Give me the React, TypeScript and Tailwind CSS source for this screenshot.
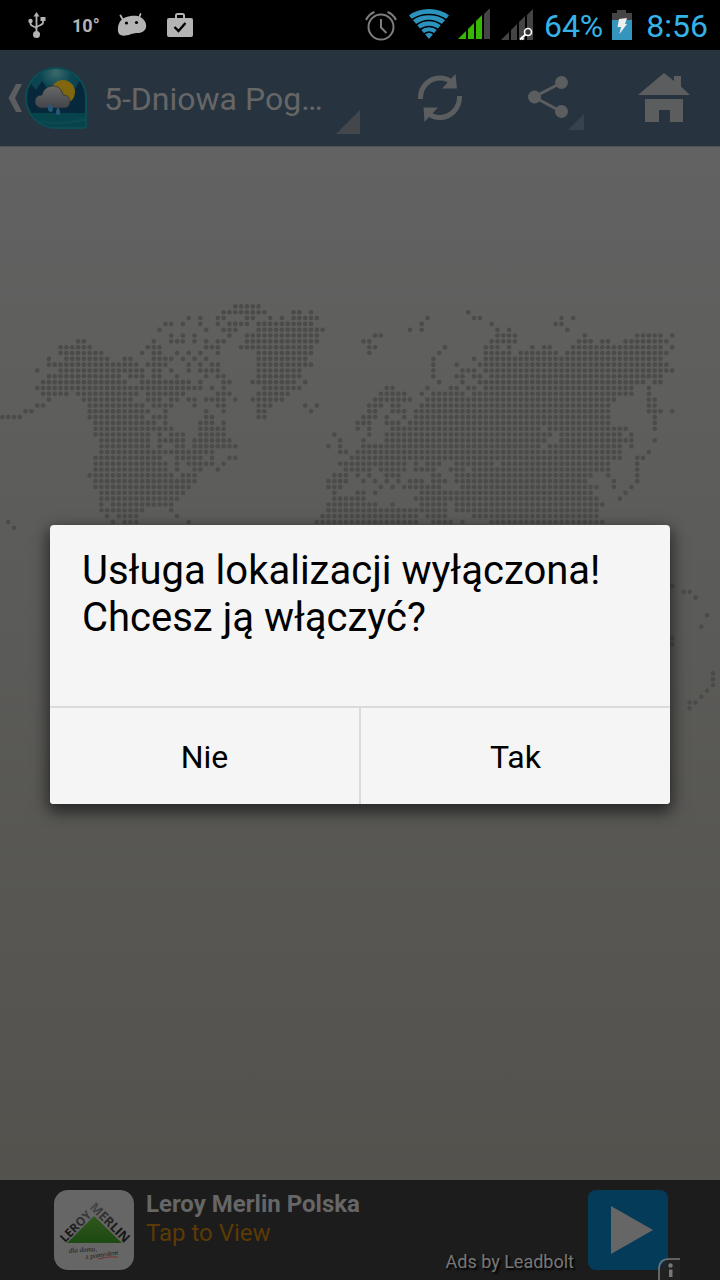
import React from "react";

/* Land dots of the world map: one entry per grid row, "from-to" column runs. */
const MAP_ROWS: Record<number, string> = {
  0: "40-44",
  1: "38-45 50-51 53 80",
  2: "32 34 37-38 42-43 46 48 50-54 73 81-82 96 98",
  3: "28-29 31 34 37 39-42 44-53 72 84 95-96",
  4: "27 35 38-40 44-55 70 72 85 87 97",
  5: "29 31 33 39 42-54 64-65 85-88 100 109-113 115",
  6: "13-14 26 29-31 33 35 37-38 42-54 62-63 84-88 99-101 103-104 107-114",
  7: "10-15 25-27 35-37 41-53 63-64 76 83-85 87 91 93-94 98-113 115",
  8: "10-17 24 26-27 30 32 34 37 44-53 63 75 83-87 89-95 97-114",
  9: "8 11-18 21-22 26-29 31 33 35 44-52 74 81 83-113",
  10: "8-23 25-28 32 34 36-37 44-53 74 78 82-114",
  11: "6 10-24 26-27 29 32 34-37 44-51 74 79-81 83-115",
  12: "8-20 22-24 26-27 30 35 37-38 44-51 74 78-79 81-82 84-113",
  13: "7-21 24-32 34 38-39 43-50 52 75 79 82-110 112-113",
  14: "6-34 36 38 45-51 66-67 73 77-78 80-81 83-108 111",
  15: "7-11 13-23 25-31 37-39 44-49 65-69 72 74-79 81-108 111",
  16: "8 14-22 25-27 29-30 32-33 35-38 40 43-48 64-70 73-105 111-112",
  17: "6-7 15-24 26-29 33 37-38 44-46 52 54 63-65 67-68 72-104 111-112",
  18: "4-5 15-25 28 35 38 44-45 53 63-64 67-69 71-104 111-113 115",
  19: "0-3 15-24 26-28 35-36 44-45 62-64 66 69 71-104 112",
  20: "16-26 28 34-36 38 61-63 66-68 70-104 112",
  21: "16-29 34-38 61 63 67-92 94-107 112",
  22: "16-25 27 29-31 34-38 57 63 66-94 96-106 108",
  23: "17-25 27-31 33-39 58 62 66-93 96-108 112",
  24: "17-25 27 30-31 33-40 56 58 62-92 94-106 108",
  25: "17-36 58-59 61-106 111",
  26: "16-27 30-34 36 39-40 60-106 109-110",
  27: "16-28 30 32-36 38 58-69 71 73-75 78-84 86-104 109",
  28: "16-28 30 33-34 37 59-63 65-69 71-74 77-79 81-104 109",
  29: "15-29 31-33 57-59 61 63 66-68 74-75 78-101 104 109",
  30: "16-33 56-59 62 64 66 68 70-72 74-76 78-100 105 109",
  31: "16-32 56-58 65 67 69-75 79-102 105 108",
  32: "17-31 57 61-62 64 72-101 107",
  33: "17-30 57-62 71-102 106",
  34: "17 19-29 56-64 67 72-76 78-103",
  35: "17-24 29 56-76 78-102",
  36: "18 20-23 30 55-71 73-76 81-102",
  37: "1 19 21-23 32 54-71 74-77 79 84-103",
  38: "2",
  48: "115",
  49: "117-118",
  50: "119",
  53: "121",
  55: "120",
  57: "115",
  58: "115",
  63: "122",
  64: "122",
  65: "122",
  66: "121",
  67: "120",
  68: "118-119",
  69: "118",
};

const PITCH = 5.825;

const DOTS: { key: string; x: number; y: number }[] = Object.entries(MAP_ROWS).flatMap(([row, runs]) =>
  runs.split(" ").flatMap((run) => {
    const [from, to = from] = run.split("-").map(Number);
    return Array.from({ length: to - from + 1 }, (_, i) => ({
      key: `${row}-${from + i}`,
      x: 2.3 + (from + i) * PITCH,
      y: 6.4 + Number(row) * PITCH,
    }));
  })
);

function WorldMap() {
  return (
    <svg viewBox="0 0 720 420" className="block w-full" fill="#4b4b49" aria-hidden="true">
      {DOTS.map((d) => (
        <circle key={d.key} cx={d.x} cy={d.y} r="2.3" />
      ))}
    </svg>
  );
}

function StatusBar() {
  return (
    <div className="flex h-[50px] items-center justify-between bg-black pr-3 pl-7">
      <div className="flex items-center text-[#b4b4b4]">
        <svg width="18" height="26" viewBox="0 0 18 26" fill="none" stroke="currentColor" strokeWidth="1.8" aria-label="USB">
          <path d="M8.500 3v18M8.500 17c0-3-6-2-6-5.500V9M8.500 16c0-3 6.500-2 6.500-5.500V7" />
          <path d="M8.500 0l3 4.500h-6zM12.500 5h5v4h-5z" fill="currentColor" stroke="none" />
          <circle cx="2.500" cy="9" r="2.200" fill="currentColor" stroke="none" />
          <circle cx="8.500" cy="22.500" r="3.500" fill="currentColor" stroke="none" />
        </svg>
        <span className="ml-[26px] text-[18px] font-bold">10°</span>
        <svg className="ml-[17px]" width="30" height="24" viewBox="0 0 30 24" aria-label="Android">
          <path d="M5.500 6L3.500 2.500M22 5l1.500-4" stroke="currentColor" strokeWidth="1.800" strokeLinecap="round" />
          <path d="M8 4.500c5-2 12-2.500 15-.5 4 2 7 6 6 10.500-1 4-5 5.500-8 5.500-3 0-5 .5-8 1.500C9 23 3 23.500 1.500 20 0 16 1 7 8 4.500z" fill="currentColor" />
          <circle cx="9.500" cy="10" r="1.600" fill="#000" />
          <circle cx="19.500" cy="9.500" r="1.600" fill="#000" />
        </svg>
        <svg className="ml-5" width="26" height="24" viewBox="0 0 26 24" aria-label="Zakupy">
          <path d="M9 6V2.500Q9 1 10.500 1h5Q17 1 17 2.500V6" fill="none" stroke="currentColor" strokeWidth="2" />
          <rect y="5" width="26" height="19" rx="2" fill="currentColor" />
          <path d="M7.500 14l4 4 7-8" fill="none" stroke="#000" strokeWidth="2.400" />
        </svg>
      </div>
      <div className="flex items-center text-[#35b3e6]">
        <svg width="32" height="32" viewBox="0 0 32 32" fill="none" stroke="#7e7e7e" strokeWidth="2" aria-label="Alarm">
          <circle cx="16" cy="18" r="12.500" />
          <path d="M16 10v8.500l5.500 5.500M1 11Q4 5 9.500 3M31 11Q28 5 22.500 3" />
        </svg>
        <svg className="ml-3" width="40" height="32" viewBox="0 0 40 32" aria-label="Wi-Fi">
          <path d="M20 30L0 6.500Q8 0 20 0t20 6.500z" fill="#2b93bd" />
          <path d="M2.500 11Q10 5.500 20 5.500T37.500 11M7 16Q13 11.500 20 11.500T33 16M10.500 21Q15 17.500 20 17.500T29.500 21M14 26Q17 23 20 23t6 3" fill="none" stroke="#000" strokeWidth="1.700" />
        </svg>
        <svg className="ml-2" width="34" height="32" viewBox="0 0 34 32" aria-label="Sygnał">
          <path d="M1 30l8-8v8zM11 20l6-6v16h-6zM19 12l6-6v24h-6z" fill="#35b900" />
          <path d="M27 5l6-6v31h-6z" fill="#444" />
        </svg>
        <svg className="ml-[9px]" width="34" height="32" viewBox="0 0 34 32" aria-label="Sygnał SIM 2">
          <path d="M1 31l8-8v8zM11 21l6-6v16h-6zM19 13l6-6v24h-6zM27 6l6-6v31h-6z" fill="#444" />
          <circle cx="28" cy="23" r="3.500" fill="#333" stroke="#fff" strokeWidth="1.600" />
          <path d="M25.500 25.500L20 30.500M21 28l2.500 2.500" stroke="#fff" strokeWidth="1.800" />
        </svg>
        <span className="ml-[10px] pt-0.5 text-[32px]">64%</span>
        <svg className="ml-2" width="22" height="32" viewBox="0 0 22 32" aria-label="Bateria">
          <path d="M1 4h5V1h9v3h6v8H1z" fill="#444" />
          <path d="M1 11h20v20H1z" fill="#3595bd" />
          <path d="M8 10l8-1-2 6h2L8.500 25l1.500-7H6.500z" fill="#eee" />
        </svg>
        <time className="ml-[13px] pt-0.5 text-[32px]">8:56</time>
      </div>
    </div>
  );
}

function AppIcon() {
  return (
    <svg width="64" height="64" viewBox="0 0 64 64" aria-hidden="true">
      <defs>
        <radialGradient id="sky" cx="50%" cy="10%" r="70%">
          <stop offset="0" stopColor="#3c6b6a" />
          <stop offset=".35" stopColor="#0c4653" />
          <stop offset="1" stopColor="#083c4c" />
        </radialGradient>
        <linearGradient id="cloud" x1="0" y1="0" x2="0" y2="1">
          <stop offset="0" stopColor="#686868" />
          <stop offset="1" stopColor="#424449" />
        </linearGradient>
        <clipPath id="drop">
          <path d="M32 3a29 29 0 0 1 29 29v26q0 3-3 3H32A29 29 0 0 1 32 3z" />
        </clipPath>
      </defs>
      <path d="M32 1a31 31 0 0 1 31 31v27q0 4-4 4H32A31 31 0 0 1 32 1z" fill="#0c4d52" />
      <g clipPath="url(#drop)">
        <path d="M0 0h64v64H0z" fill="url(#sky)" />
        <path d="M0 26l4-5 3-3 5 6 6-9 5 7 6 6 10-2 9 2 8-14 8 13v22H0z" fill="#06283a" />
        <path d="M0 47h64v17H0z" fill="#07434b" />
        <path d="M6 52q26 8 56-1v4q-28 7-54 0z" fill="#0b4a50" />
      </g>
      <circle cx="39" cy="26" r="12" fill="#80670e" />
      <path d="M17 42a6.500 6.500 0 0 1 1-13c1-5 5-9 11-9 6 0 9 4 10 9 6 0 7 4 7 7s-2 6-6 6z" fill="url(#cloud)" stroke="#202b34" strokeWidth=".7" />
      <path d="M26 37q5 7 1.500 9-4 0-3.500-4zM34 41q4 6 1 8-4 0-3-4z" fill="#24587a" />
    </svg>
  );
}

function Header() {
  return (
    <header className="flex h-24 items-stretch bg-[#273440] text-[#5b5d5f]">
      <button type="button" aria-label="Wstecz" className="flex items-center pl-2">
        <svg width="14" height="28" viewBox="0 0 14 28" fill="currentColor" aria-hidden="true">
          <path d="M8 0h6L7 14l7 14H8L.500 14z" />
        </svg>
        <span className="ml-0.5">
          <AppIcon />
        </span>
      </button>
      <button type="button" className="relative flex min-w-0 flex-1 items-center pl-4 text-left">
        <span className="truncate pt-0.5 text-[32px] text-[#666]">5-Dniowa Pog…</span>
        <svg className="absolute right-6 bottom-3" width="24" height="24" viewBox="0 0 24 24" aria-hidden="true">
          <path d="M24 0v24H0z" fill="#43474b" />
        </svg>
      </button>
      <button type="button" aria-label="Odśwież" className="flex w-28 items-center justify-center">
        <svg width="44" height="50" viewBox="0 0 44 50" aria-hidden="true">
          <path d="M2.500 26C2 13 12 5 22 5c6 0 10 2 13 6M41.500 23C42 36 32 44.500 22 44.500c-5 0-9-1.500-12-4.500" fill="none" stroke="currentColor" strokeWidth="5" />
          <path d="M37.500 1l1.500 14.500H24zM6.500 49L5.500 34.500H20z" fill="currentColor" />
        </svg>
      </button>
      <button type="button" aria-label="Udostępnij" className="relative flex w-28 items-center justify-center">
        <svg width="48" height="44" viewBox="0 0 48 44" fill="currentColor" aria-hidden="true">
          <path d="M6 21L34 6.500M6 21l28 15" stroke="currentColor" strokeWidth="3" />
          <circle cx="6.500" cy="21" r="6.500" />
          <circle cx="33.500" cy="6.500" r="6.500" />
          <circle cx="33.500" cy="35.500" r="6.500" />
        </svg>
        <svg className="absolute right-6 bottom-4" width="16" height="16" viewBox="0 0 16 16" aria-hidden="true">
          <path d="M16 0v16H0z" fill="#36434d" />
        </svg>
      </button>
      <button type="button" aria-label="Strona główna" className="flex w-28 items-center justify-center">
        <svg width="52" height="50" viewBox="0 0 52 50" fill="currentColor" aria-hidden="true">
          <path d="M26 0l10 8V3h7v10.500L52 22H0zM7 26h38v23H32V37H21v12H7z" />
        </svg>
      </button>
    </header>
  );
}

function StoreLogo() {
  return (
    <svg width="80" height="80" viewBox="0 0 80 80" aria-label="Leroy Merlin" className="shrink-0">
      <defs>
        <linearGradient id="roof" x1="0" y1="0" x2="0" y2="1">
          <stop offset="0" stopColor="#31561d" />
          <stop offset="1" stopColor="#1c4a12" />
        </linearGradient>
        <linearGradient id="rising" x1="0" y1="0" x2="1" y2="0">
          <stop offset=".3" stopColor="#161616" />
          <stop offset="1" stopColor="#404040" />
        </linearGradient>
        <linearGradient id="falling" x1="0" y1="0" x2="1" y2="0">
          <stop offset="0" stopColor="#484848" />
          <stop offset=".7" stopColor="#161616" />
        </linearGradient>
      </defs>
      <rect width="80" height="80" rx="14" fill="#666" />
      <path d="M40 26L68 53H13z" fill="url(#roof)" />
      <g fontFamily="'Open Sans', sans-serif" fontWeight="bold">
        <text transform="translate(11 53) rotate(-45)" fontSize="12" fill="url(#rising)">LEROY</text>
        <text transform="translate(35 18) rotate(45)" fontSize="13" fill="url(#falling)">MERLIN</text>
      </g>
      <g fontFamily="'Liberation Serif', serif" fontStyle="italic" fontSize="7" fill="#181818">
        <text transform="translate(15 63) rotate(-4)">dla domu,</text>
        <text transform="translate(32 69) rotate(-8)">z pomysłem</text>
      </g>
      <path d="M44 69q10-3 20-2" stroke="#7c2424" strokeWidth=".8" fill="none" />
    </svg>
  );
}

function AdBanner() {
  return (
    <aside className="relative flex h-[100px] items-start bg-[#1c1c1c] pt-[10px] pr-[52px] pl-[54px]">
      <StoreLogo />
      <div className="ml-3 min-w-0 flex-1 text-[24px] leading-[29px]">
        <div className="font-bold text-[#666]">Leroy Merlin Polska</div>
        <a href="#view" className="block text-[#5b3a05]">Tap to View</a>
      </div>
      <span className="mr-[14px] self-end pb-2 text-[18px] leading-5 text-[#777] [text-shadow:2px_2px_2px_#000]">Ads by Leadbolt</span>
      <button type="button" aria-label="Otwórz reklamę" className="flex size-20 items-center justify-center rounded-lg bg-[#033b59]">
        <svg className="ml-2" width="42" height="48" viewBox="0 0 42 48" aria-hidden="true">
          <path d="M0 0l42 24L0 48z" fill="#666" />
        </svg>
      </button>
      <svg className="absolute right-10 bottom-0" width="22" height="22" viewBox="0 0 22 22" aria-label="Informacje">
        <path d="M1 22V10l8-9h13v21z" fill="#222" fillOpacity=".85" />
        <path d="M1 22V11Q1 1 11 1h11" fill="none" stroke="#777" strokeWidth="1.600" />
        <circle cx="12.500" cy="7.500" r="2.200" fill="#777" />
        <path d="M11 11.500h3.500V19H11z" fill="#777" />
      </svg>
    </aside>
  );
}

function LocationDialog() {
  return (
    <div className="absolute inset-0 flex items-center justify-center px-[50px] pb-0.5">
      <div role="alertdialog" aria-labelledby="question" className="w-full overflow-hidden rounded-[4px] bg-[#f5f5f5] text-black shadow-[0_6px_16px_2px_rgba(0,0,0,0.6)]">
        <p id="question" className="px-8 pt-[22px] pb-[65px] text-[40px] leading-[47px]">
          Usługa lokalizacji wyłączona!<br />Chcesz ją włączyć?
        </p>
        <div className="grid grid-cols-2 gap-x-0.5 border-t-2 border-[#dadada] bg-[#dadada] text-[32px]">
          <button type="button" className="h-24 bg-[#f5f5f5] pt-0.5">Nie</button>
          <button type="button" className="h-24 bg-[#f5f5f5] pt-0.5">Tak</button>
        </div>
      </div>
    </div>
  );
}

export default function App() {
  return (
    <div className="flex min-h-screen flex-col font-['Roboto',sans-serif]">
      <StatusBar />
      <div className="relative flex flex-1 flex-col">
        <Header />
        <main className="flex-1 border-t border-[#515253] bg-linear-to-b from-[#626262] to-[#53524d] pt-[153px]">
          <WorldMap />
        </main>
        <AdBanner />
        <LocationDialog />
      </div>
    </div>
  );
}
